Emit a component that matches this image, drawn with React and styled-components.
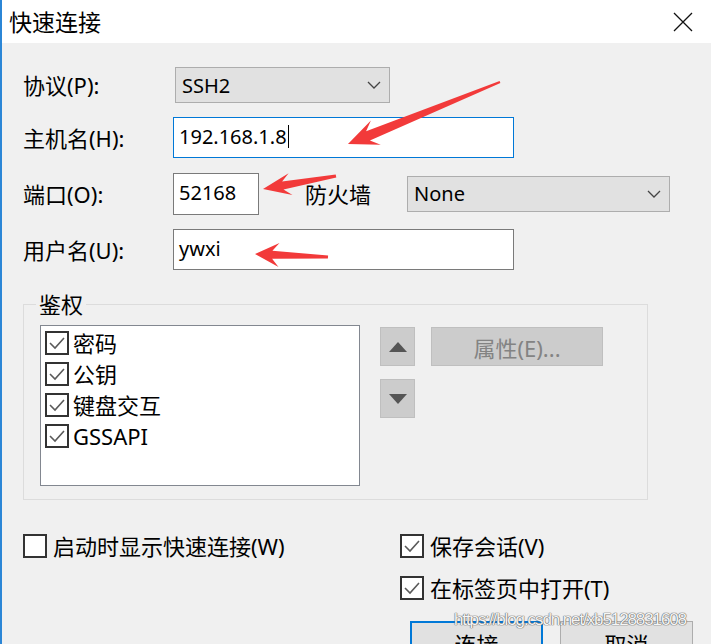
import React from 'react';
import styled, { createGlobalStyle } from 'styled-components';

const GlobalStyle = createGlobalStyle`
  html, body {
    margin: 0;
    padding: 0;
    background: #f0f0f0;
  }
  body {
    font-family: "Noto Sans", "Noto Sans CJK SC", sans-serif;
    color: #000;
  }
`;

const Window = styled.div`
  position: relative;
  width: 711px;
  height: 644px;
  overflow: hidden;
  box-sizing: border-box;
  border-left: 2px solid #2b86d6;
  background: #f0f0f0;
`;

const TitleBar = styled.div`
  height: 43px;
  background: #fff;
  display: flex;
  align-items: center;
  justify-content: space-between;
  padding: 0 18px 0 7px;
`;

const Title = styled.div`
  font-size: 23px;
  line-height: 30px;
`;

const Close = styled.svg`
  width: 20px;
  height: 20px;
`;

const FormGrid = styled.div`
  display: grid;
  grid-template-columns: 150px 1fr;
  grid-auto-rows: auto;
  row-gap: 14px;
  align-items: center;
  padding: 24px 0 0 21px;
`;

const Label = styled.div`
  font-size: 22px;
  line-height: 26px;
`;

const Control = styled.div`
  display: flex;
  align-items: center;
  height: ${(p) => p.$h}px;
`;

const Select = styled.div`
  box-sizing: border-box;
  width: ${(p) => p.$w}px;
  height: 36px;
  margin-left: ${(p) => p.$ml || 0}px;
  background: #e1e1e1;
  border: 1px solid #adadad;
  display: flex;
  align-items: center;
  justify-content: space-between;
  padding: 0 8px 0 6px;
  font-size: 20px;
`;

const Chevron = styled.svg`
  width: 14px;
  height: 8px;
`;

const TextBox = styled.div`
  box-sizing: border-box;
  width: ${(p) => p.$w}px;
  height: ${(p) => p.$h}px;
  background: #fff;
  border: 1px solid ${(p) => (p.$focus ? '#0078d7' : '#7a7a7a')};
  display: flex;
  align-items: center;
  padding: 0 0 2px 5px;
  font-size: 20px;
  line-height: 24px;
`;

const Caret = styled.span`
  display: inline-block;
  width: 1px;
  height: 23px;
  margin-left: 1px;
  background: #000;
`;

const Firewall = styled.div`
  font-size: 22px;
  line-height: 26px;
  margin: 0 36px 0 46px;
`;

const GroupBox = styled.fieldset`
  box-sizing: border-box;
  width: 625px;
  min-width: 0;
  margin: 21px 0 0 21px;
  padding: 8px 15px 13px 16px;
  border: 1px solid #dcdcdc;
`;

const Legend = styled.legend`
  font-size: 22px;
  line-height: 26px;
  padding: 0 3px;
  margin-left: -4px;
`;

const GroupContent = styled.div`
  display: flex;
  align-items: flex-start;
`;

const ListBox = styled.div`
  box-sizing: border-box;
  width: 320px;
  height: 161px;
  background: #fff;
  border: 1px solid #828790;
  padding: 1px 4px;
`;

const ListItem = styled.div`
  display: flex;
  align-items: center;
  gap: 4px;
  height: 31px;
  font-size: 22px;
  line-height: 26px;
`;

const Box = styled.span`
  box-sizing: border-box;
  flex: none;
  width: 24px;
  height: 24px;
  background: #fff;
  border: 2px solid #333;
  display: flex;
  align-items: center;
  justify-content: center;
`;

const OrderColumn = styled.div`
  display: flex;
  flex-direction: column;
  gap: 13px;
  margin: 2px 16px 0 20px;
`;

const OrderButton = styled.div`
  box-sizing: border-box;
  width: 35px;
  height: 39px;
  background: #cccccc;
  border: 1px solid #bfbfbf;
  display: flex;
  align-items: center;
  justify-content: center;
`;

const PropButton = styled.div`
  box-sizing: border-box;
  width: 172px;
  height: 39px;
  margin-top: 2px;
  background: #cccccc;
  border: 1px solid #bfbfbf;
  color: #838383;
  font-size: 22px;
  display: flex;
  align-items: center;
  justify-content: center;
`;

const Options = styled.div`
  display: grid;
  grid-template-columns: 377px 1fr;
  margin-top: 34px;
  padding-left: 21px;
`;

const OptionColumn = styled.div`
  display: flex;
  flex-direction: column;
  gap: 18px;
`;

const CheckRow = styled.div`
  display: flex;
  align-items: center;
  gap: 6px;
  height: 24px;
  font-size: 22px;
  line-height: 26px;
  white-space: nowrap;
`;

const ButtonRow = styled.div`
  display: flex;
  gap: 17px;
  margin: 3px 0 0 10px;
`;

const DialogButton = styled.div`
  box-sizing: border-box;
  width: 133px;
  height: 40px;
  background: #e1e1e1;
  border: ${(p) => (p.$default ? '2px solid #0078d7' : '1px solid #adadad')};
  font-size: 22px;
  display: flex;
  align-items: center;
  justify-content: center;
  padding-top: 4px;
`;

const Overlay = styled.svg`
  position: absolute;
  left: -2px;
  top: 0;
  width: 711px;
  height: 644px;
  pointer-events: none;
`;

const Watermark = styled.span`
  position: absolute;
  left: 452px;
  top: 610px;
  font-family: "Liberation Sans", sans-serif;
  font-size: 17px;
  letter-spacing: -1.1px;
  color: rgba(255, 255, 255, 0.95);
  text-shadow: 0 0 1px #666, 0 0 1px #666, 0 0 1px #666;
`;

const Check = () => (
  <svg width="18" height="14" viewBox="0 0 18 14">
    <path d="M2 7 L7 12 L16 2" fill="none" stroke="#5a5a5a" strokeWidth="1.6" />
  </svg>
);

const CheckBox = ({ checked }) => <Box>{checked && <Check />}</Box>;

const Down = () => (
  <Chevron viewBox="0 0 14 8">
    <path d="M1 1 L7 7 L13 1" fill="none" stroke="#444" strokeWidth="1.3" />
  </Chevron>
);

// tapered red arrow, tip first, widths measured off the screenshot
const arrowPoints = (tip, tail, headLen, headHalf, neck, tailHalf) => {
  const dx = tail[0] - tip[0];
  const dy = tail[1] - tip[1];
  const len = Math.hypot(dx, dy);
  const ux = dx / len;
  const uy = dy / len;
  const at = (d, w) => [tip[0] + ux * d - uy * w, tip[1] + uy * d + ux * w];
  return [
    tip,
    at(headLen, headHalf),
    at(headLen * 0.72, neck),
    at(len, tailHalf),
    at(len, -tailHalf),
    at(headLen * 0.72, -neck),
    at(headLen, -headHalf),
  ].map((p) => p.map((v) => v.toFixed(1)).join(',')).join(' ');
};

const arrows = [
  [[348, 144], [500, 82], 30, 13, 5, 1],
  [[263, 189], [336, 176], 28, 11, 4, 1.5],
  [[255, 254], [328, 257], 24, 12, 4, 1.5],
];

const authItems = ['密码', '公钥', '键盘交互', 'GSSAPI'];

const App = () => (
  <>
    <GlobalStyle />
    <Window>
      <TitleBar>
        <Title>快速连接</Title>
        <Close viewBox="0 0 20 20">
          <path d="M1 1 L19 19 M19 1 L1 19" stroke="#111" strokeWidth="1.3" />
        </Close>
      </TitleBar>

      <FormGrid>
        <Label>协议(P):</Label>
        <Control $h={36}>
          <Select $w={215} $ml={2}>
            SSH2
            <Down />
          </Select>
        </Control>

        <Label>主机名(H):</Label>
        <Control $h={41}>
          <TextBox $w={341} $h={41} $focus>
            192.168.1.8
            <Caret />
          </TextBox>
        </Control>

        <Label>端口(O):</Label>
        <Control $h={43}>
          <TextBox $w={86} $h={42}>52168</TextBox>
          <Firewall>防火墙</Firewall>
          <Select $w={263}>
            None
            <Down />
          </Select>
        </Control>

        <Label>用户名(U):</Label>
        <Control $h={41}>
          <TextBox $w={341} $h={41}>ywxi</TextBox>
        </Control>
      </FormGrid>

      <GroupBox>
        <Legend>鉴权</Legend>
        <GroupContent>
          <ListBox>
            {authItems.map((item) => (
              <ListItem key={item}>
                <CheckBox checked />
                {item}
              </ListItem>
            ))}
          </ListBox>
          <OrderColumn>
            <OrderButton>
              <svg width="18" height="10" viewBox="0 0 18 10">
                <path d="M9 0 L18 10 L0 10 Z" fill="#555" />
              </svg>
            </OrderButton>
            <OrderButton>
              <svg width="18" height="10" viewBox="0 0 18 10">
                <path d="M0 0 L18 0 L9 10 Z" fill="#555" />
              </svg>
            </OrderButton>
          </OrderColumn>
          <PropButton>属性(E)...</PropButton>
        </GroupContent>
      </GroupBox>

      <Options>
        <OptionColumn>
          <CheckRow>
            <CheckBox />
            启动时显示快速连接(W)
          </CheckRow>
        </OptionColumn>
        <OptionColumn>
          <CheckRow>
            <CheckBox checked />
            保存会话(V)
          </CheckRow>
          <CheckRow>
            <CheckBox checked />
            在标签页中打开(T)
          </CheckRow>
          <ButtonRow>
            <DialogButton $default>连接</DialogButton>
            <DialogButton>取消</DialogButton>
          </ButtonRow>
        </OptionColumn>
      </Options>

      <Overlay viewBox="0 0 711 644">
        {arrows.map((a, i) => (
          <polygon key={i} points={arrowPoints(...a)} fill="#f23a3a" />
        ))}
      </Overlay>
      <Watermark>https://blog.csdn.net/xb5128831608</Watermark>
    </Window>
  </>
);

export default App;
